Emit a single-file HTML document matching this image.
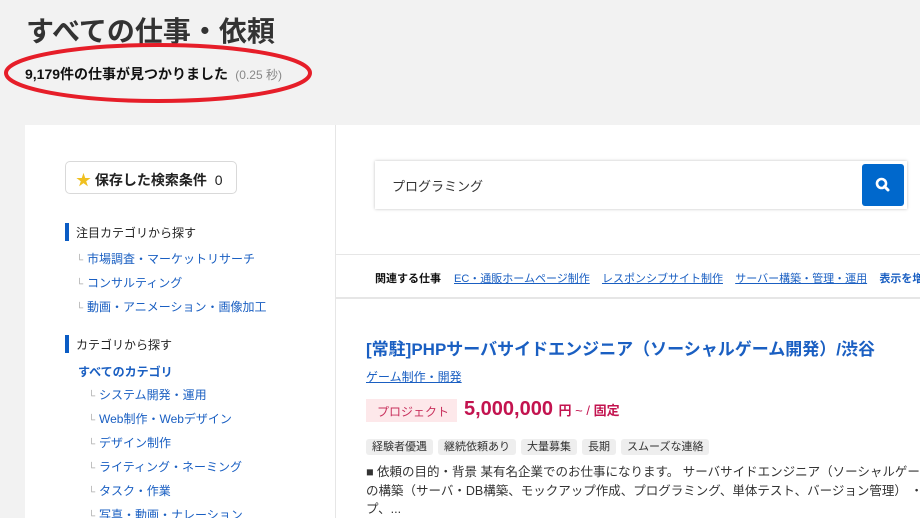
<!DOCTYPE html>
<html><head><meta charset="utf-8"><style>
*{margin:0;padding:0;box-sizing:border-box}
html,body{width:920px;height:518px;overflow:hidden}
body{background:#f2f2f2;font-family:"Liberation Sans","Noto Sans CJK JP",sans-serif;color:#333}
#w{position:relative;width:920px;height:518px;overflow:hidden}
.a{position:absolute;white-space:nowrap}
.lk{color:#1a5fc2;text-decoration:none}
.u{text-decoration:underline}
.t{background:#eee;padding:2px 6px;border-radius:3px;margin-right:5px}
.it{height:24px;line-height:24px;font-size:12px}
.it i{font-style:normal;color:#aaa;font-size:10px;display:inline-block;width:11px}
</style></head><body><div id="w">
<div class="a" style="left:26px;top:10px;font-size:28px;font-weight:bold;color:#333">すべての仕事・依頼</div>
<div class="a" style="left:25px;top:64px;font-size:14px;font-weight:bold;color:#111">9,179件の仕事が見つかりました <span style="font-weight:normal;color:#888;font-size:12px">&nbsp;(0.25 秒)</span></div>
<svg class="a" style="left:0;top:0" width="340" height="120"><ellipse cx="158" cy="73" rx="152" ry="28" fill="none" stroke="#e61e29" stroke-width="4"/></svg>

<div class="a" style="left:25px;top:125px;width:895px;height:393px;background:#fff"></div>
<div class="a" style="left:335px;top:125px;width:1px;height:393px;background:#e6e6e6"></div>
<div class="a" style="left:336px;top:254px;width:584px;height:1px;background:#e6e6e6"></div>
<div class="a" style="left:336px;top:297px;width:584px;height:2px;background:#e6e6e6"></div>

<div class="a" style="left:65px;top:161px;width:172px;height:33px;border:1px solid #d9d9d9;border-radius:5px;font-size:14px;font-weight:bold;color:#222;padding:7px 0 0 10px"><span style="color:#f0c020;font-size:15px">★</span> 保存した検索条件 <span style="font-weight:normal;margin-left:4px">0</span></div>

<div class="a" style="left:65px;top:223px;width:4px;height:18px;background:#0b5cc4"></div>
<div class="a" style="left:76px;top:224px;font-size:12px;color:#222">注目カテゴリから探す</div>
<div class="a" style="left:76px;top:247px">
<div class="it"><i>└</i><span class="lk">市場調査・マーケットリサーチ</span></div>
<div class="it"><i>└</i><span class="lk">コンサルティング</span></div>
<div class="it"><i>└</i><span class="lk">動画・アニメーション・画像加工</span></div></div>
<div class="a" style="left:65px;top:335px;width:4px;height:18px;background:#0b5cc4"></div>
<div class="a" style="left:76px;top:336px;font-size:12px;color:#222">カテゴリから探す</div>
<div class="a lk" style="left:78px;top:363px;font-size:12px;font-weight:bold">すべてのカテゴリ</div>
<div class="a" style="left:88px;top:383px">
<div class="it"><i>└</i><span class="lk">システム開発・運用</span></div>
<div class="it"><i>└</i><span class="lk">Web制作・Webデザイン</span></div>
<div class="it"><i>└</i><span class="lk">デザイン制作</span></div>
<div class="it"><i>└</i><span class="lk">ライティング・ネーミング</span></div>
<div class="it"><i>└</i><span class="lk">タスク・作業</span></div>
<div class="it"><i>└</i><span class="lk">写真・動画・ナレーション</span></div></div>

<div class="a" style="left:375px;top:161px;width:532px;height:48px;background:#fff;box-shadow:0 0 3px rgba(0,0,0,.25)"></div>
<div class="a" style="left:392px;top:176px;font-size:13px;color:#333">プログラミング</div>
<div class="a" style="left:862px;top:164px;width:42px;height:42px;background:#0068cc;border-radius:3px"></div>
<svg class="a" style="left:874px;top:176px" width="18" height="18"><circle cx="7.5" cy="7.5" r="4.5" fill="none" stroke="#fff" stroke-width="2.6"/><line x1="10.5" y1="10.5" x2="14" y2="14" stroke="#fff" stroke-width="3" stroke-linecap="round"/></svg>

<div class="a" style="left:375px;top:270px;font-size:11px;font-weight:bold;color:#111">関連する仕事</div>
<div class="a" style="left:454px;top:270px;font-size:11px"><span class="lk u">EC・通販ホームページ制作</span>&nbsp;&nbsp;&nbsp;&nbsp;<span class="lk u">レスポンシブサイト制作</span>&nbsp;&nbsp;&nbsp;&nbsp;<span class="lk u">サーバー構築・管理・運用</span>&nbsp;&nbsp;&nbsp;&nbsp;<b class="lk">表示を増やす</b></div>

<div class="a lk" style="left:366px;top:335px;font-size:17px;font-weight:bold">[常駐]PHPサーバサイドエンジニア（ソーシャルゲーム開発）/渋谷</div>
<div class="a lk u" style="left:366px;top:368px;font-size:12px">ゲーム制作・開発</div>
<div class="a" style="left:366px;top:399px;width:91px;height:23px;background:#fde8ea;color:#c8305c;font-size:12px;padding:4px 0 0 11px">プロジェクト</div>
<div class="a" style="left:464px;top:398px;color:#c3134f;font-weight:bold;font-size:20px">5,000,000 <span style="font-size:13px">円 <span style="font-weight:normal">~ /</span> 固定</span></div>
<div class="a" style="left:366px;top:438px;font-size:11px;color:#333"><span class="t">経験者優遇</span><span class="t">継続依頼あり</span><span class="t">大量募集</span><span class="t">長期</span><span class="t">スムーズな連絡</span></div>
<div class="a" style="left:366px;top:463px;font-size:12.5px;line-height:18.5px;color:#333">■ 依頼の目的・背景 某有名企業でのお仕事になります。 サーバサイドエンジニア（ソーシャルゲーム開発）<br>の構築（サーバ・DB構築、モックアップ作成、プログラミング、単体テスト、バージョン管理） ・運用<br>プ、...</div>
</div></body></html>
